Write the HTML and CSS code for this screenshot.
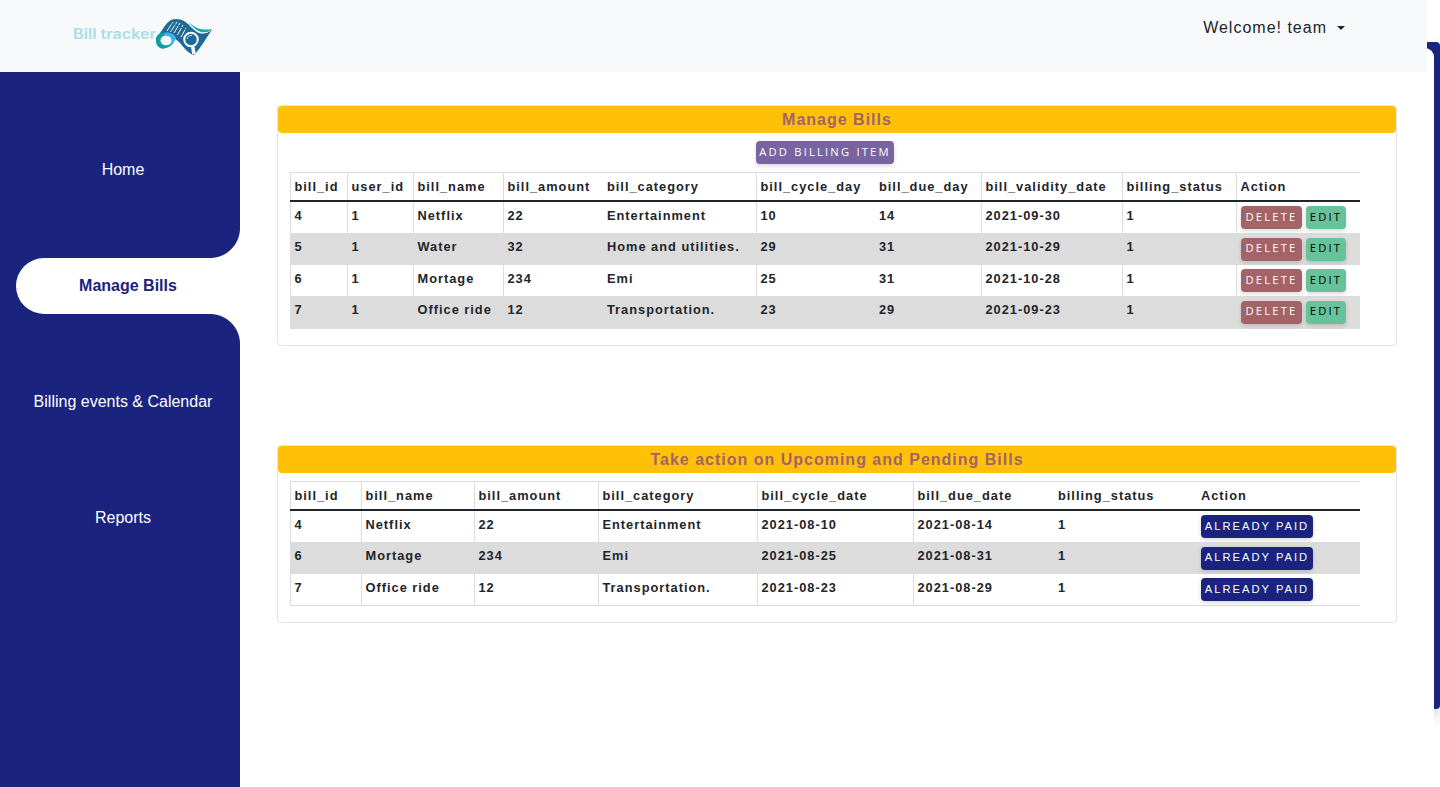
FILE: index.html
```
<!DOCTYPE html>
<html lang="en">
<head>
<meta charset="utf-8">
<title>Bill tracker</title>
<link rel="stylesheet" href="styles.css">
</head>
<body>
<div class="backdrop"></div>
<div class="sheet"></div>
<div class="page">
  <header class="topbar">
    <a class="brand">
      <svg width="142" height="40" viewBox="0 0 142 40">
        <text class="brand-name" x="1" y="23" textLength="83" lengthAdjust="spacingAndGlyphs">Bill tracker</text>
        <g transform="translate(83 2)">
          <path d="M1 20C7 14 10 5 16 2C20 0 26 1 29 3C36 8 37 10 42 14C47 17 53 15 57 12C51 20 46 30 39 37C34 36 30 31 25 25C21 21 17 18 12 18C6 17 3 20 1 24Z" fill="#1d6a96"/>
          <path d="M32 3C39 10 46 14 57 11.5C50 19 38 15 32 3Z" fill="#f8f9fb"/>
          <path d="M34 4C40 10 46 13 57 11C52 17 41 15 34 4Z" fill="#16a4a8"/>
          <path d="M40 14C45 17 50 17 54 15L50 20L43 18Z" fill="#1d6a96"/>
          <path d="M4 17C10 12 20 15 21 20C19 26 15 30 10 30C5 31 1 28 1 23Z" fill="#3fb3e6"/>
          <path d="M1 22C1 17 5 14 10 15L6 22C5 26 9 28 16 26C10 34 1 31 1 22Z" fill="#129da0"/>
          <ellipse cx="11" cy="22.5" rx="5.5" ry="4.8" fill="#f8f9fb"/>
          <path d="M12 13L18 4M15.500 14L22 4M19 15L25 5M22.500 17L28 7M26 19L31 10" fill="none" stroke="#f8f9fb" stroke-width="1" stroke-dasharray="8 1"/>
          <circle cx="36" cy="21.500" r="6.800" fill="#1d6a96" stroke="#f8f9fb" stroke-width="2"/>
          <path d="M32 21A4.500 4.500 0 0 1 37 17.500" stroke="#b9dce8" fill="none"/>
          <path d="M37.800 29L39 36" stroke="#f8f9fb" stroke-width="3.600"/>
        </g>
      </svg>
    </a>
    <div class="user">Welcome! team<span class="caret"></span></div>
  </header>
  <div class="body">
    <nav class="sidebar">
      <a class="nav-item">Home</a>
      <a class="nav-item active">Manage Bills</a>
      <a class="nav-item">Billing events &amp; Calendar</a>
      <a class="nav-item">Reports</a>
    </nav>
    <main class="content">
      <section class="card manage">
        <h2 class="card-title">Manage Bills</h2>
        <div class="toolbar"><button class="btn add">ADD BILLING ITEM</button></div>
        <table class="grid">
          <colgroup><col class="w57"><col class="w66"><col class="w90"><col class="w100"><col class="w153"><col class="w119"><col class="w106"><col class="w141"><col class="w114"><col class="w124"></colgroup>
          <thead><tr><th>bill_id</th><th>user_id</th><th>bill_name</th><th>bill_amount</th><th class="open">bill_category</th><th>bill_cycle_day</th><th class="open">bill_due_day</th><th>bill_validity_date</th><th>billing_status</th><th>Action</th></tr></thead>
          <tbody>
            <tr><td>4</td><td>1</td><td>Netflix</td><td>22</td><td class="open">Entertainment</td><td>10</td><td class="open">14</td><td>2021-09-30</td><td>1</td><td class="actions"><button class="btn delete">DELETE</button><button class="btn edit">EDIT</button></td></tr>
            <tr><td>5</td><td>1</td><td>Water</td><td>32</td><td class="open">Home and utilities.</td><td>29</td><td class="open">31</td><td>2021-10-29</td><td>1</td><td class="actions"><button class="btn delete">DELETE</button><button class="btn edit">EDIT</button></td></tr>
            <tr><td>6</td><td>1</td><td>Mortage</td><td>234</td><td class="open">Emi</td><td>25</td><td class="open">31</td><td>2021-10-28</td><td>1</td><td class="actions"><button class="btn delete">DELETE</button><button class="btn edit">EDIT</button></td></tr>
            <tr><td>7</td><td>1</td><td>Office ride</td><td>12</td><td class="open">Transportation.</td><td>23</td><td class="open">29</td><td>2021-09-23</td><td>1</td><td class="actions"><button class="btn delete">DELETE</button><button class="btn edit">EDIT</button></td></tr>
          </tbody>
        </table>
      </section>
      <section class="card pending">
        <h2 class="card-title">Take action on Upcoming and Pending Bills</h2>
        <table class="grid">
          <colgroup><col class="w71"><col class="w113"><col class="w124"><col class="w159"><col class="w156"><col class="w141"><col class="w143"><col class="w163"></colgroup>
          <thead><tr><th>bill_id</th><th>bill_name</th><th>bill_amount</th><th>bill_category</th><th>bill_cycle_date</th><th>bill_due_date</th><th class="open">billing_status</th><th class="open">Action</th></tr></thead>
          <tbody>
            <tr><td>4</td><td>Netflix</td><td>22</td><td>Entertainment</td><td>2021-08-10</td><td>2021-08-14</td><td class="open">1</td><td class="open actions"><button class="btn paid">ALREADY PAID</button></td></tr>
            <tr><td>6</td><td>Mortage</td><td>234</td><td>Emi</td><td>2021-08-25</td><td>2021-08-31</td><td class="open">1</td><td class="open actions"><button class="btn paid">ALREADY PAID</button></td></tr>
            <tr><td>7</td><td>Office ride</td><td>12</td><td>Transportation.</td><td>2021-08-23</td><td>2021-08-29</td><td class="open">1</td><td class="open actions"><button class="btn paid">ALREADY PAID</button></td></tr>
          </tbody>
        </table>
      </section>
    </main>
  </div>
</div>
</body>
</html>
```
FILE: styles.css
```
* { box-sizing: border-box; }
body {
  margin: 0;
  height: 787px;
  overflow: hidden;
  position: relative;
  background: #fff;
  color: #212529;
  font: 16px/24px "Liberation Sans", Arial, sans-serif;
}
/* Layered panels that peek out behind the right edge of the page */
.backdrop {
  position: absolute;
  top: 42px; right: 0;
  width: 600px; height: 667px;
  border-radius: 4px;
  background: #1a237e;
  box-shadow: 0 8px 16px rgba(0, 0, 0, .15);
}
.sheet {
  position: absolute;
  top: 48px; right: 6px; bottom: 0;
  width: 620px;
  border-radius: 0 9px 0 0;
  background: #fff;
}
.page { position: relative; width: 1427px; height: 787px; display: flex; flex-direction: column; }
.topbar {
  height: 72px;
  background: #f8f9fb;
  display: flex;
  justify-content: space-between;
  align-items: flex-start;
  padding: 16px 81px 0 72px;
}
.brand svg { display: block; }
.brand-name { font: 600 14px Inter, sans-serif; fill: #a8dde8; }
.user { display: flex; align-items: center; letter-spacing: 1px; }
.caret { margin-left: 10px; border: 4.8px solid transparent; border-top-color: #212529; border-bottom: 0; }
.user { padding-right: 1px; }
.body { flex: 1; display: flex; }
.sidebar {
  width: 240px;
  background: #1a237e;
  padding: 70px 0 0 16px;
  display: flex;
  flex-direction: column;
  gap: 60px;
}
.nav-item { position: relative; height: 56px; line-height: 55px; padding-right: 10px; text-align: center; color: #fff; }
.nav-item.active { padding: 0; background: #fff; color: #1a237e; font-weight: 700; border-radius: 30px 0 0 30px; }
.nav-item.active::before, .nav-item.active::after {
  content: "";
  position: absolute;
  right: 0;
  width: 30px; height: 30px;
}
.nav-item.active::before { bottom: 100%; background: radial-gradient(circle at 0 0, transparent 29.5px, #fff 30.5px); }
.nav-item.active::after { top: 100%; background: radial-gradient(circle at 0 100%, transparent 29.5px, #fff 30.5px); }
.content { padding: 33px 0 0 37px; }
.card { width: 1120px; border: 1px solid #e3e4e5; border-radius: 4px; background: #fff; letter-spacing: 1px; }
.manage { height: 241px; margin-bottom: 99px; }
.pending { height: 178px; }
.card-title {
  margin: 0;
  height: 27px;
  font-size: 16px;
  line-height: 27px;
  text-align: center;
  background: #ffc107;
  border-radius: 4px;
  color: #a36468;
}
.toolbar { height: 39px; padding-top: 8px; display: flex; justify-content: center; padding-right: 24px; }
.pending .grid { margin-top: 8px; }
.grid {
  margin-left: 12px;
  width: 1070px;
  table-layout: fixed;
  border-collapse: separate;
  border-spacing: 0;
  border-bottom: 1px solid #dcdcdc;
  font-size: 12.8px;
  line-height: 18px;
  font-weight: 700;
}
.grid th, .grid td { padding: 5.3px 0 0 4.5px; text-align: left; vertical-align: top; white-space: nowrap; box-shadow: inset 1px 0 #dcdcdc; }
.grid th { height: 29.7px; padding-top: 5px; border-top: 1px solid #dcdcdc; border-bottom: 2px solid #212529; }
.grid td { height: 31.5px; }
.grid .open { box-shadow: none; padding-left: 4px; }
.grid tbody tr:nth-child(even) td { background: #dcdcdc; }
.grid .actions { padding: 4.5px 0 0 5px; line-height: 0; }
.grid .open.actions { padding-left: 4px; }
.w57 { width: 57px; } .w66 { width: 66px; } .w71 { width: 71px; } .w90 { width: 90px; }
.w100 { width: 100px; } .w106 { width: 106px; } .w113 { width: 113px; } .w114 { width: 114px; }
.w119 { width: 119px; } .w124 { width: 124px; } .w141 { width: 141px; } .w143 { width: 143px; }
.w153 { width: 153px; } .w156 { width: 156px; } .w159 { width: 159px; } .w163 { width: 163px; }
.btn {
  height: 23px;
  padding: 0 0 2px;
  border: 0;
  border-radius: 4px;
  vertical-align: top;
  color: #fff;
  font: 500 11.2px/20px "Open Sans", sans-serif;
  letter-spacing: 2.2px;
  text-align: center;
  white-space: nowrap;
  box-shadow: 0 2px 4px rgba(0, 0, 0, .15);
}
.add { width: 138px; background: #7764a0; }
.delete { width: 61px; margin-right: 4px; background: #a36468; }
.edit { width: 40px; background: #66c29b; color: #000; }
.paid { width: 112px; background: #1a237e; font-family: "Liberation Sans", sans-serif; letter-spacing: 2px; }
```
